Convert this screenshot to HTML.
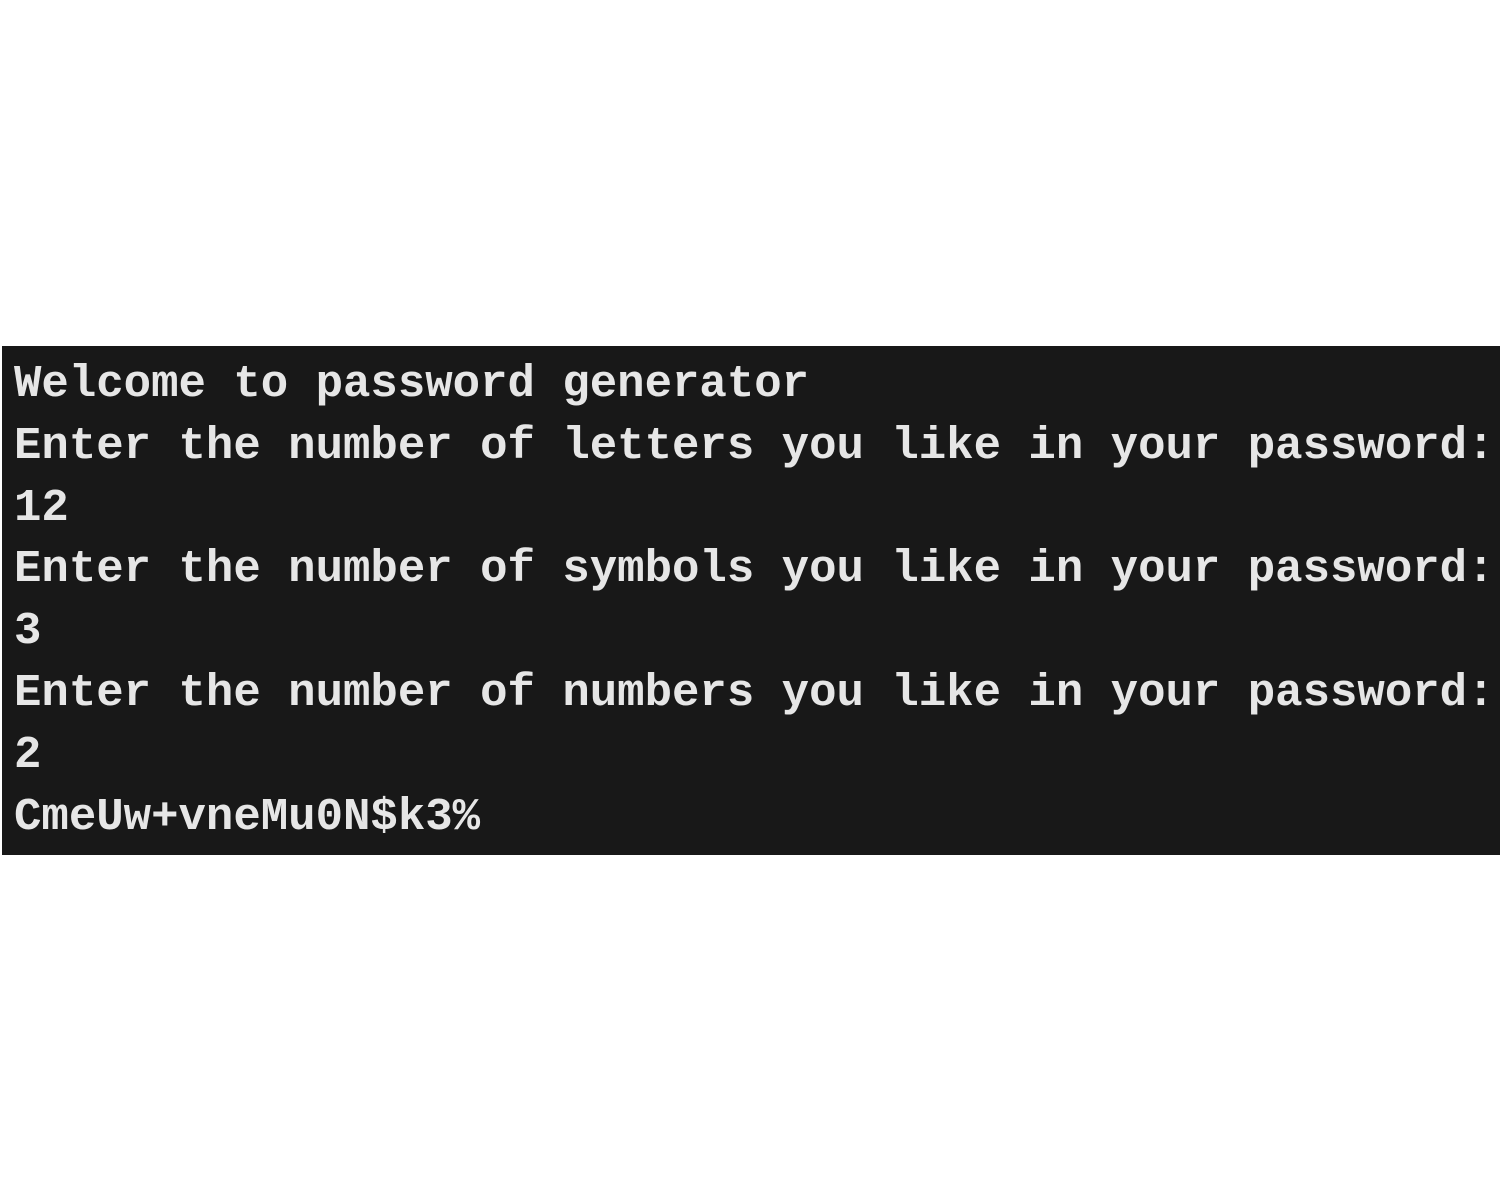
<!DOCTYPE html>
<html><head><meta charset="utf-8"><style>
html,body{margin:0;padding:0;background:#fff;width:1500px;height:1200px;overflow:hidden}
.t{position:absolute;left:2px;top:346px;width:1498px;height:509px;background:#181818}
pre{margin:0;position:absolute;left:14px;top:354px;font-family:"Liberation Mono",monospace;font-weight:bold;font-size:45.7px;line-height:61.8px;color:#e6e6e6;white-space:pre}
</style></head><body>
<div class="t"></div>
<pre>Welcome to password generator
Enter the number of letters you like in your password:
12
Enter the number of symbols you like in your password:
3
Enter the number of numbers you like in your password:
2
CmeUw+vneMu0N$k3%</pre>
</body></html>
